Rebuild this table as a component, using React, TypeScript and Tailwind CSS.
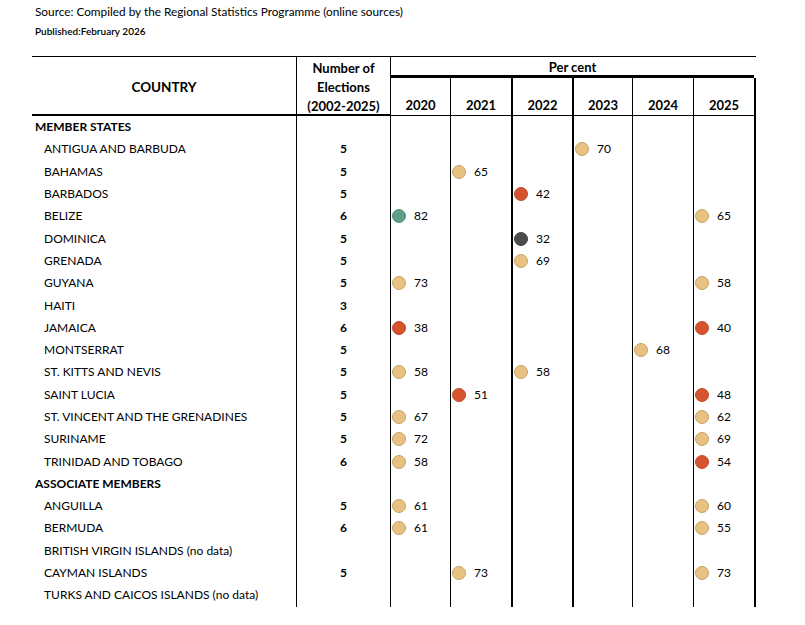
import React from 'react';

type Dot = { year: number; value: number; color: 'tan' | 'red' | 'green' | 'dark' };
type Row = { name: string; count?: number; dots?: Dot[]; section?: boolean };

const YEARS = [2020, 2021, 2022, 2023, 2024, 2025];

const rows: Row[] = [
  { name: 'MEMBER STATES', section: true },
  { name: 'ANTIGUA AND BARBUDA', count: 5, dots: [{ year: 2023, value: 70, color: 'tan' }] },
  { name: 'BAHAMAS', count: 5, dots: [{ year: 2021, value: 65, color: 'tan' }] },
  { name: 'BARBADOS', count: 5, dots: [{ year: 2022, value: 42, color: 'red' }] },
  { name: 'BELIZE', count: 6, dots: [{ year: 2020, value: 82, color: 'green' }, { year: 2025, value: 65, color: 'tan' }] },
  { name: 'DOMINICA', count: 5, dots: [{ year: 2022, value: 32, color: 'dark' }] },
  { name: 'GRENADA', count: 5, dots: [{ year: 2022, value: 69, color: 'tan' }] },
  { name: 'GUYANA', count: 5, dots: [{ year: 2020, value: 73, color: 'tan' }, { year: 2025, value: 58, color: 'tan' }] },
  { name: 'HAITI', count: 3 },
  { name: 'JAMAICA', count: 6, dots: [{ year: 2020, value: 38, color: 'red' }, { year: 2025, value: 40, color: 'red' }] },
  { name: 'MONTSERRAT', count: 5, dots: [{ year: 2024, value: 68, color: 'tan' }] },
  { name: 'ST. KITTS AND NEVIS', count: 5, dots: [{ year: 2020, value: 58, color: 'tan' }, { year: 2022, value: 58, color: 'tan' }] },
  { name: 'SAINT LUCIA', count: 5, dots: [{ year: 2021, value: 51, color: 'red' }, { year: 2025, value: 48, color: 'red' }] },
  { name: 'ST. VINCENT AND THE GRENADINES', count: 5, dots: [{ year: 2020, value: 67, color: 'tan' }, { year: 2025, value: 62, color: 'tan' }] },
  { name: 'SURINAME', count: 5, dots: [{ year: 2020, value: 72, color: 'tan' }, { year: 2025, value: 69, color: 'tan' }] },
  { name: 'TRINIDAD AND TOBAGO', count: 6, dots: [{ year: 2020, value: 58, color: 'tan' }, { year: 2025, value: 54, color: 'red' }] },
  { name: 'ASSOCIATE MEMBERS', section: true },
  { name: 'ANGUILLA', count: 5, dots: [{ year: 2020, value: 61, color: 'tan' }, { year: 2025, value: 60, color: 'tan' }] },
  { name: 'BERMUDA', count: 6, dots: [{ year: 2020, value: 61, color: 'tan' }, { year: 2025, value: 55, color: 'tan' }] },
  { name: 'BRITISH VIRGIN ISLANDS (no data)' },
  { name: 'CAYMAN ISLANDS', count: 5, dots: [{ year: 2021, value: 73, color: 'tan' }, { year: 2025, value: 73, color: 'tan' }] },
  { name: 'TURKS AND CAICOS ISLANDS (no data)' },
];

const dotClass = {
  tan: 'bg-[#e8c283] border-[#c9a264]',
  red: 'bg-[#d6532f] border-[#c24a2a]',
  green: 'bg-[#5f9e89] border-[#568f7c]',
  dark: 'bg-[#4b4b4b] border-[#444444]',
};

// border per year column (thin / thick as in the source sheet)
const yearBorder = [
  'border-l border-black',
  'border-l border-black',
  'border-l-2 border-black',
  'border-l-2 border-black',
  'border-l border-black',
  'border-l border-black',
];

const cols = 'grid grid-cols-[264px_94px_60px_61px_61px_60px_61px_61px_2px]';

const App = () => {
  return (
    <div className="w-[805px] h-[625px] bg-white text-black font-['Lato',sans-serif]">
      <div className="pl-[35px] pt-[3px]">
        <div className="text-[11.8px] leading-[17px]">Source: Compiled by the Regional Statistics Programme (online sources)</div>
        <div className="text-[10px] leading-[14px] mt-[4px] font-semibold">Published:February 2026</div>
      </div>

      <div className="ml-[32px] mt-[18px] w-[724px]">
        {/* header */}
        <div className={`${cols} grid-rows-[21px_38px] border-t border-black`}>
          <div className="row-span-2 border-b-2 border-black flex items-center justify-center pt-[4px] font-bold text-[13.5px]">
            COUNTRY
          </div>
          <div className="row-span-2 border-l border-b-2 border-black flex flex-col items-center justify-center pt-[4px] font-bold text-[13px] leading-[19px]">
            <span>Number of</span>
            <span>Elections</span>
            <span>(2002-2025)</span>
          </div>
          <div className="col-span-6 border-l border-b-[3px] border-black flex items-center justify-center pt-[3px] font-bold text-[13px]">
            Per cent
          </div>
          <div />
          {YEARS.map((y, i) => (
            <div key={y} className={`${yearBorder[i]} border-b flex items-end justify-center pb-0 font-bold text-[13px]`}>
              {y}
            </div>
          ))}
          <div className="border-l-2 border-b border-black" />
        </div>

        {/* body */}
        {rows.map((r) => (
          <div key={r.name} className={`${cols} h-[22.3px] text-[12px]`}>
            <div className={`flex items-center ${r.section ? 'pl-[3px] font-bold' : 'pl-[12px]'}`}>{r.name}</div>
            <div className="border-l border-black flex items-center justify-center font-bold">{r.count ?? ''}</div>
            {YEARS.map((y, i) => {
              const d = r.dots?.find((x) => x.year === y);
              return (
                <div key={y} className={`${yearBorder[i]} flex items-center pl-[1px]`}>
                  {d && (
                    <>
                      <span className={`w-[14px] h-[14px] rounded-full border ${dotClass[d.color]}`} />
                      <span className="ml-[8px]">{d.value}</span>
                    </>
                  )}
                </div>
              );
            })}
            <div className="border-l-2 border-black" />
          </div>
        ))}
      </div>
    </div>
  );
};

export default App;
